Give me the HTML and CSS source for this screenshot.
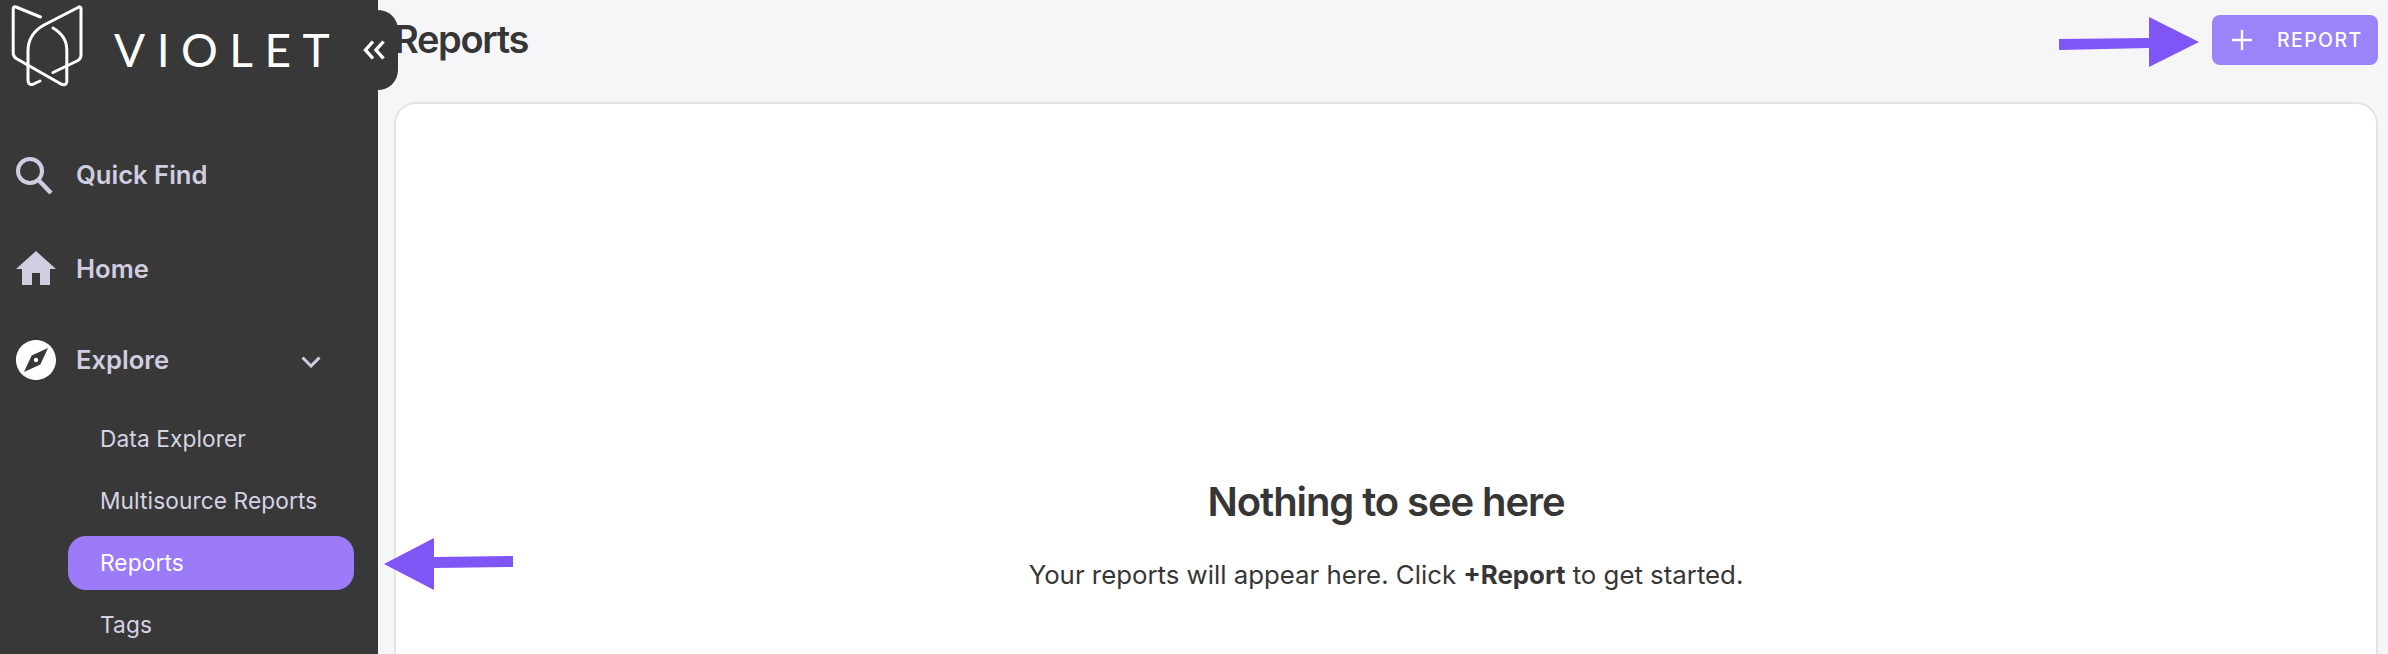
FILE: index.html
```html
<!DOCTYPE html>
<html lang="en">
<head>
<meta charset="utf-8">
<title>Reports</title>
<link rel="stylesheet" href="styles.css">
</head>
<body>
<div class="app">
  <aside class="sidebar">
    <div class="brand">
      <svg class="logo" viewBox="0 0 90 90" width="90" height="90" fill="none" stroke="#fff" stroke-width="3" stroke-linecap="round" stroke-linejoin="round">
        <path d="M40.5 17L16 7q-2.800-1-2.800 2V53q0 3.500 3 5.500L61 84q5 2 5.800-2V50q0-14-13.800-22"/>
        <path d="M79 7q2-.500 2 2V55q0 4-4 6L53 72.500"/>
        <path d="M79 7L44 25q-16 9-16 26V80q0 5 4.500 4.500L40 81"/>
      </svg>
      <span class="wordmark">VIOLET</span>
    </div>
    <button class="collapse" aria-label="Collapse">
      <svg viewBox="0 0 24 22" width="24" height="22" fill="none" stroke="#fff" stroke-width="3.400">
        <path d="M10 2.500L2.500 11l7.500 8.500M20.500 2.500L13 11l7.500 8.500"/>
      </svg>
    </button>
    <nav class="nav">
      <a class="nav-top nav-find">
        <svg class="nav-icon" viewBox="0 0 48 48" fill="none" stroke="#d0cde0" stroke-width="4">
          <circle cx="18" cy="20" r="12"/><path d="M26.500 29L39 42" stroke-width="4.400"/>
        </svg>
        <span class="nav-label">Quick Find</span>
      </a>
      <a class="nav-top nav-home">
        <svg class="nav-icon" viewBox="0 0 24 24" fill="#d0cde0"><path d="M10 20v-6h4v6h5v-8h3L12 3 2 12h3v8z"/></svg>
        <span class="nav-label">Home</span>
      </a>
      <a class="nav-top nav-explore">
        <svg class="nav-icon" viewBox="0 0 24 24" fill="#fff"><path d="M12 10.900c-.61 0-1.100.49-1.100 1.100s.49 1.100 1.100 1.100c.61 0 1.100-.49 1.100-1.100s-.49-1.100-1.100-1.100zM12 2C6.480 2 2 6.480 2 12s4.480 10 10 10 10-4.480 10-10S17.520 2 12 2zm2.190 12.190L6 18l3.810-8.190L18 6l-3.810 8.190z"/></svg>
        <span class="nav-label">Explore</span>
        <svg class="chevron" viewBox="0 0 20 12" width="20" height="12" fill="none" stroke="#d0cde0" stroke-width="3"><path d="M1.500 1.500L10 10l8.500-8.500"/></svg>
      </a>
      <div class="subnav">
        <a class="sub-item">Data Explorer</a>
        <a class="sub-item">Multisource Reports</a>
        <a class="sub-item is-active">Reports</a>
        <a class="sub-item">Tags</a>
      </div>
    </nav>
  </aside>
  <main class="main">
    <header class="header">
      <h1 class="title">Reports</h1>
      <button class="add-btn">
        <svg viewBox="0 0 22 22" width="22" height="22" fill="none" stroke="#fff" stroke-width="2.400"><path d="M11 1v20M1 11h20"/></svg>
        <span>REPORT</span>
      </button>
    </header>
    <section class="card">
      <h2 class="empty-title">Nothing to see here</h2>
      <p class="empty-text">Your reports will appear here. Click <strong>+Report</strong> to get started.</p>
    </section>
  </main>
  <svg class="arrow arrow-left" viewBox="0 0 130 52" width="130" height="52"><path fill="#7f55f6" d="M0 26L50 0V19L129 18V29L50 30V52Z"/></svg>
  <svg class="arrow arrow-right" viewBox="0 0 140 52" width="140" height="52"><path fill="#7f55f6" d="M140 25L90 0V21L0 22V33L90 31V50Z"/></svg>
</div>
</body>
</html>
```
FILE: styles.css
```css
* { box-sizing: border-box; }
html, body { margin: 0; height: 100%; overflow: hidden; }
body { font-family: Inter, "Liberation Sans", sans-serif; color: #363636; background: #f6f6f9; }
.app { display: flex; height: 654px; position: relative; overflow: hidden; }

.sidebar { width: 378px; flex: none; background: #383838; position: relative; z-index: 2; }
.brand { display: flex; align-items: center; height: 90px; }
.logo { flex: none; }
.wordmark { font-family: Lato, sans-serif; font-weight: 400; font-size: 46px; letter-spacing: 11.500px; color: #fff; margin-left: 24px; margin-top: 8px; }
.collapse { position: absolute; left: 340px; top: 10px; width: 58px; height: 80px; border: 0; padding: 29px 0 0 23px; background: #383838; border-radius: 0 20px 20px 0; display: flex; align-items: flex-start; }
.collapse svg { display: block; }

.nav { display: flex; flex-direction: column; padding-top: 55px; }
.nav-top { display: flex; align-items: center; height: 60px; padding-left: 12px; color: #d0cde0; font-size: 25.600px; font-weight: 600; }
.nav-home { margin-top: 34px; }
.nav-explore { margin-top: 31px; }
.nav-icon { width: 48px; height: 48px; flex: none; margin-right: 16px; }
.nav-label { margin-bottom: 2px; }
.chevron { margin-left: 132px; margin-top: 4px; }
.subnav { display: flex; flex-direction: column; gap: 8px; padding: 22px 24px 0 68px; }
.sub-item { display: flex; align-items: center; height: 54px; padding: 0 0 2px 32px; border-radius: 18px; color: #d6d3e4; font-size: 22.700px; font-weight: 400; letter-spacing: .1px; }
.is-active { background: #9b7bf7; color: #fff; }

.main { flex: 1; min-width: 0; display: flex; flex-direction: column; padding: 15px 10px 0 16px; }
.header { display: flex; justify-content: space-between; align-items: center; height: 50px; padding-bottom: 2px; }
.title { margin: 0; font-size: 38px; font-weight: 600; letter-spacing: -1.350px; color: #363636; }
.add-btn { display: flex; align-items: center; gap: 24px; width: 166px; height: 50px; padding: 0 0 0 19px; border: 0; border-radius: 8px; background: #9b83f9; color: #fff; font-family: inherit; font-size: 19.500px; font-weight: 500; letter-spacing: 1.400px; margin-top: 2px; }
.card { margin: 37px 0 0 0; flex: none; height: 700px; background: #fff; border: 2px solid #e4e4e4; border-radius: 22px; text-align: center; padding-top: 371px; }
.empty-title { margin: 0; font-size: 40px; font-weight: 600; letter-spacing: -1.100px; line-height: 54px; color: #363636; }
.empty-text { margin: 28px 0 0; font-size: 25.800px; line-height: 36px; color: #363636; }
.empty-text strong { font-weight: 700; }

.arrow { position: absolute; z-index: 3; }
.arrow-left { left: 384px; top: 538px; }
.arrow-right { left: 2059px; top: 17px; }
```
